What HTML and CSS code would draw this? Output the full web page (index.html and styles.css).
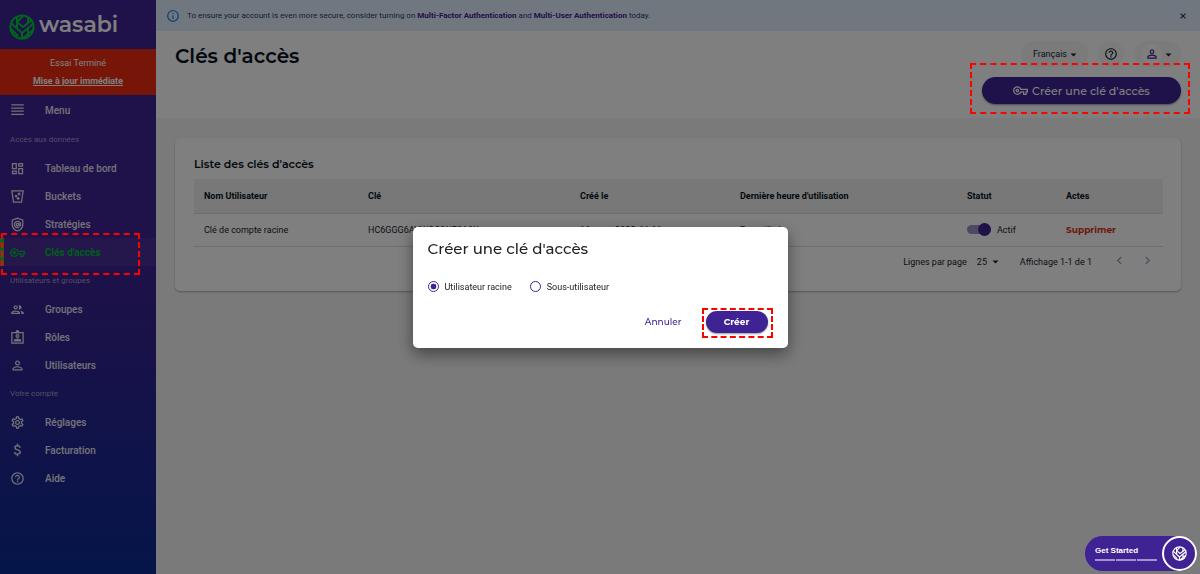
FILE: index.html
```html
<!DOCTYPE html>
<html lang="fr">
<head>
    <meta charset="UTF-8">
    <meta name="viewport" content="width=device-width, initial-scale=1.0">
    <title>Clés d'accès - Wasabi</title>
    <link rel="stylesheet" href="styles.css">
</head>
<body>
<!-- Shared icons -->
<svg class="sprite" aria-hidden="true">
    <symbol id="leaf" viewBox="0 0 26 26">
        <g fill="none" stroke="currentColor" stroke-width="2" stroke-linejoin="round">
            <circle cx="13" cy="13" r="11.6"/>
            <path d="M2 9 L13 19 V25"/>
            <path d="M8 3 V14 M2 15 L9 22"/>
            <path d="M14 2 L8 8 M8 8 L14 13 L23 6"/>
            <path d="M13 19 L24 10 M19 9 V3 M19 14 V23 M13 25 L24 16"/>
        </g>
    </symbol>
    <symbol id="key" viewBox="0 0 24 24">
        <path fill="currentColor" d="M22 19h-6v-4h-2.68c-1.14 2.42-3.6 4-6.32 4-3.86 0-7-3.14-7-7s3.14-7 7-7c2.72 0 5.17 1.58 6.32 4H24v6h-2v4zm-4-2h2v-4h2v-2H11.94l-.23-.67C11.01 8.34 9.11 7 7 7c-2.76 0-5 2.24-5 5s2.24 5 5 5c2.11 0 4.01-1.34 4.71-3.33l.23-.67H18v4zM7 15c-1.65 0-3-1.35-3-3s1.35-3 3-3 3 1.35 3 3-1.35 3-3 3zm0-4c-.55 0-1 .45-1 1s.45 1 1 1 1-.45 1-1-.45-1-1-1z"/>
    </symbol>
    <symbol id="help" viewBox="0 0 24 24">
        <path fill="currentColor" d="M11 18h2v-2h-2v2zm1-16C6.48 2 2 6.48 2 12s4.48 10 10 10 10-4.48 10-10S17.520 2 12 2zm0 18c-4.41 0-8-3.59-8-8s3.59-8 8-8 8 3.59 8 8-3.59 8-8 8zm0-14c-2.21 0-4 1.79-4 4h2c0-1.1.9-2 2-2s2 .9 2 2c0 2-3 1.750-3 5h2c0-2.250 3-2.500 3-5 0-2.210-1.790-4-4-4z"/>
    </symbol>
    <symbol id="person" viewBox="0 0 24 24">
        <path fill="currentColor" d="M12 5.9a2.1 2.1 0 1 1 0 4.2 2.1 2.1 0 0 1 0-4.2m0 9c2.97 0 6.1 1.46 6.1 2.1v1.1H5.9V17c0-.64 3.13-2.1 6.1-2.1M12 4C9.79 4 8 5.79 8 8s1.79 4 4 4 4-1.79 4-4-1.79-4-4-4zm0 9c-2.67 0-8 1.34-8 4v3h16v-3c0-2.66-5.33-4-8-4z"/>
    </symbol>
    <symbol id="caret" viewBox="0 0 24 24">
        <path fill="currentColor" d="M4 9l8 8 8-8z"/>
    </symbol>
</svg>

<div class="app">
    <aside class="sidebar">
        <a class="brand" href="#">
            <svg class="brand-mark"><use href="#leaf"/></svg>
            <span class="brand-name">wasabi</span>
        </a>

        <div class="trial">
            <span>Essai Terminé</span>
            <a href="#">Mise à jour immédiate</a>
        </div>

        <nav class="nav">
            <button class="nav-item nav-toggle" type="button">
                <svg class="nav-icon" viewBox="0 0 24 24"><path fill="currentColor" d="M2 2h20v2H2zM2 7h20v2H2zM2 12h20v2H2zM2 17h20v2H2z"/></svg>
                Menu
            </button>

            <h2 class="nav-label">Accès aux données</h2>
            <a class="nav-item" href="#">
                <svg class="nav-icon" viewBox="0 0 24 24"><path fill="currentColor" d="M19 5v2h-4V5h4M9 5v6H5V5h4m10 8v6h-4v-6h4M9 17v2H5v-2h4M21 3h-8v6h8V3zM11 3H3v10h8V3zm10 8h-8v10h8V11zm-10 4H3v6h8v-6z"/></svg>
                Tableau de bord
            </a>
            <a class="nav-item" href="#">
                <svg class="nav-icon" viewBox="0 0 24 24">
                    <path fill="none" stroke="currentColor" stroke-width="2" d="M3 3h18l-2.6 18H5.6z"/>
                    <path fill="currentColor" d="M12.500 6h4v4h-4zM8 9.500h3.500v3.500H8z"/>
                    <circle cx="13" cy="15" r="2.300" fill="currentColor"/>
                </svg>
                Buckets
            </a>
            <a class="nav-item" href="#">
                <svg class="nav-icon" viewBox="0 0 24 24">
                    <g fill="none" stroke="currentColor" stroke-width="2">
                        <path d="M12 1.800 3.500 5v6.500c0 5 3.600 9.300 8.500 10.700 4.900-1.400 8.500-5.700 8.500-10.700V5z"/>
                        <path d="M14.500 16.200A5 5 0 1 1 17 12v.6c0 1.900-2.700 1.900-2.700 0V9.700"/>
                        <circle cx="12" cy="12" r="2"/>
                    </g>
                </svg>
                Stratégies
            </a>
            <a class="nav-item active marked" href="#">
                <svg class="nav-icon"><use href="#key"/></svg>
                Clés d'accès
            </a>

            <h2 class="nav-label">Utilisateurs et groupes</h2>
            <a class="nav-item" href="#">
                <svg class="nav-icon" viewBox="0 0 24 24"><path fill="currentColor" d="M9 13.750c-2.340 0-7 1.170-7 3.500V19h14v-1.750c0-2.330-4.660-3.500-7-3.500zM4.340 17c.84-.58 2.870-1.250 4.660-1.250s3.820.67 4.660 1.250H4.340zM9 12c1.930 0 3.500-1.570 3.500-3.500S10.930 5 9 5 5.500 6.570 5.500 8.500 7.070 12 9 12zm0-5c.83 0 1.500.67 1.500 1.500S9.830 10 9 10s-1.500-.67-1.500-1.500S8.170 7 9 7zm7.040 6.810c1.160.84 1.960 1.960 1.960 3.440V19h4v-1.750c0-2.020-3.500-3.170-5.960-3.440zM15 12c1.930 0 3.500-1.570 3.500-3.500S16.930 5 15 5c-.54 0-1.040.13-1.500.35.63.89 1 1.980 1 3.150s-.37 2.260-1 3.150c.46.22.96.35 1.500.35z"/></svg>
                Groupes
            </a>
            <a class="nav-item" href="#">
                <svg class="nav-icon" viewBox="0 0 24 24">
                    <path fill="none" stroke="currentColor" stroke-width="2" d="M3 4h18v17H3z"/>
                    <path fill="currentColor" d="M9 5V3a3 3 0 0 1 6 0v2zM6 18.500v-1.700c0-2 4-3.100 6-3.100s6 1.100 6 3.100v1.700z"/>
                    <circle cx="12" cy="9.700" r="2.200" fill="none" stroke="currentColor" stroke-width="2"/>
                </svg>
                Rôles
            </a>
            <a class="nav-item" href="#">
                <svg class="nav-icon"><use href="#person"/></svg>
                Utilisateurs
            </a>

            <h2 class="nav-label">Votre compte</h2>
            <a class="nav-item" href="#">
                <svg class="nav-icon" viewBox="0 0 24 24"><path fill="currentColor" d="M19.430 12.980c.04-.32.070-.64.070-.98 0-.34-.03-.66-.07-.98l2.110-1.650c.19-.15.24-.42.120-.64l-2-3.460c-.09-.16-.26-.25-.44-.25-.06 0-.12.010-.17.030l-2.490 1c-.52-.4-1.080-.73-1.690-.98l-.38-2.650C14.460 2.180 14.250 2 14 2h-4c-.25 0-.46.180-.49.420l-.38 2.650c-.61.250-1.170.590-1.690.980l-2.490-1c-.06-.02-.12-.03-.18-.03-.17 0-.34.090-.43.250l-2 3.460c-.13.220-.07.490.120.640l2.110 1.650c-.04.320-.07.650-.07.980 0 .33.030.66.070.98l-2.110 1.650c-.19.150-.24.420-.12.640l2 3.460c.09.160.26.250.44.250.06 0 .12-.01.17-.03l2.490-1c.52.400 1.080.730 1.690.980l.38 2.650c.03.240.24.420.49.420h4c.25 0 .46-.18.49-.42l.38-2.650c.61-.25 1.170-.59 1.690-.98l2.490 1c.06.020.12.030.18.030.17 0 .34-.09.43-.25l2-3.460c.12-.22.070-.49-.12-.64l-2.110-1.650zm-1.980-1.710c.04.310.050.520.050.730 0 .210-.02.430-.05.730l-.14 1.130.89.700 1.080.840-.7 1.210-1.270-.51-1.040-.42-.9.680c-.43.320-.84.560-1.250.730l-1.060.430-.16 1.130-.2 1.350h-1.400l-.19-1.350-.16-1.130-1.060-.43c-.43-.18-.83-.41-1.230-.71l-.91-.7-1.060.430-1.270.510-.7-1.210 1.080-.84.890-.7-.14-1.130c-.03-.31-.05-.54-.05-.74s.02-.43.050-.73l.14-1.130-.89-.7-1.080-.84.700-1.210 1.270.510 1.040.420.900-.68c.43-.32.840-.56 1.250-.73l1.060-.43.160-1.130.200-1.350h1.390l.19 1.350.16 1.130 1.060.430c.43.180.83.410 1.230.710l.91.700 1.060-.43 1.270-.51.700 1.210-1.070.850-.89.700.14 1.130zM12 8c-2.210 0-4 1.790-4 4s1.790 4 4 4 4-1.790 4-4-1.790-4-4-4zm0 6c-1.100 0-2-.9-2-2s.9-2 2-2 2 .9 2 2-.9 2-2 2z"/></svg>
                Réglages
            </a>
            <a class="nav-item" href="#">
                <svg class="nav-icon" viewBox="0 0 24 24"><path fill="none" stroke="currentColor" stroke-width="2.200" d="M16 7.500c0-2-1.800-3.200-4-3.200s-4.300 1.200-4.300 3.200c0 4.500 8.800 2.500 8.800 7 0 2-1.900 3.300-4.500 3.300s-4.500-1.400-4.500-3.600M12 1v4m0 12v4"/></svg>
                Facturation
            </a>
            <a class="nav-item" href="#">
                <svg class="nav-icon"><use href="#help"/></svg>
                Aide
            </a>
        </nav>
    </aside>

    <main class="main">
        <div class="banner">
            <svg class="banner-icon" viewBox="0 0 24 24"><path fill="currentColor" d="M11 7h2v2h-2zm0 4h2v6h-2zm1-9C6.480 2 2 6.480 2 12s4.480 10 10 10 10-4.480 10-10S17.520 2 12 2zm0 18c-4.410 0-8-3.590-8-8s3.590-8 8-8 8 3.590 8 8-3.590 8-8 8z"/></svg>
            <p>To ensure your account is even more secure, consider turning on <a href="#">Multi-Factor Authentication</a> and <a href="#">Multi-User Authentication</a> today.</p>
            <button class="banner-close" type="button" aria-label="Fermer">
                <svg viewBox="0 0 10 10"><path stroke="currentColor" stroke-width="2" d="M1 1l8 8M9 1l-8 8"/></svg>
            </button>
        </div>

        <header class="header">
            <h1>Clés d'accès</h1>
            <div class="header-side">
                <div class="tools">
                    <button class="chip" type="button">Français <svg class="caret"><use href="#caret"/></svg></button>
                    <button class="chip chip-help" type="button" aria-label="Aide"><svg class="tool-icon"><use href="#help"/></svg></button>
                    <button class="chip chip-user" type="button" aria-label="Compte">
                        <span class="avatar"><svg class="tool-icon"><use href="#person"/></svg></span>
                        <svg class="caret"><use href="#caret"/></svg>
                    </button>
                </div>
                <button class="btn create-key marked" type="button">
                    <svg class="key-icon"><use href="#key"/></svg>
                    Créer une clé d'accès
                </button>
            </div>
        </header>

        <section class="card">
            <h2>Liste des clés d'accès</h2>
            <table class="keys">
                <thead>
                    <tr>
                        <th class="col-user">Nom Utilisateur</th>
                        <th class="col-key">Clé</th>
                        <th class="col-created">Créé le</th>
                        <th class="col-used">Dernière heure d'utilisation</th>
                        <th class="col-status">Statut</th>
                        <th class="col-actions">Actes</th>
                    </tr>
                </thead>
                <tbody>
                    <tr>
                        <td>Clé de compte racine</td>
                        <td>HC6GGG6AVWQO9NE8A9K</td>
                        <td>16 mars 2025, 11:11</td>
                        <td>Pas utilisé</td>
                        <td>
                            <label class="status"><input class="switch" type="checkbox" checked> Actif</label>
                        </td>
                        <td><button class="delete" type="button">Supprimer</button></td>
                    </tr>
                </tbody>
            </table>
            <div class="pagination">
                <label for="rows">Lignes par page</label>
                <span class="rows">
                    <select id="rows">
                        <option>25</option>
                        <option>50</option>
                        <option>100</option>
                    </select>
                    <svg class="caret"><use href="#caret"/></svg>
                </span>
                <span class="range">Affichage 1-1 de 1</span>
                <button class="pager" type="button" aria-label="Page précédente" disabled>
                    <svg viewBox="0 0 10 10"><path d="M7 1 3 5l4 4"/></svg>
                </button>
                <button class="pager" type="button" aria-label="Page suivante" disabled>
                    <svg viewBox="0 0 10 10"><path d="M3 1l4 4-4 4"/></svg>
                </button>
            </div>
        </section>
    </main>
</div>

<!-- Create key dialog -->
<div class="backdrop">
    <form class="modal" role="dialog" aria-labelledby="modal-title">
        <h2 id="modal-title">Créer une clé d'accès</h2>
        <div class="choices">
            <label><input type="radio" name="owner" checked> Utilisateur racine</label>
            <label><input type="radio" name="owner"> Sous-utilisateur</label>
        </div>
        <div class="modal-actions">
            <button class="cancel" type="button">Annuler</button>
            <button class="btn submit marked" type="button">Créer</button>
        </div>
    </form>
</div>

<button class="get-started" type="button">
    <span class="steps">
        Get Started
        <span class="bars"><i></i><i></i><i></i></span>
    </span>
    <span class="get-started-logo"><svg><use href="#leaf"/></svg></span>
</button>
</body>
</html>
```

FILE: styles.css
```css
* {
    box-sizing: border-box;
}

body {
    margin: 0;
    font-family: Roboto, "Liberation Sans", sans-serif;
    font-size: 9px;
    color: #16232e;
    background: #f4f4f4;
}

h1, h2, p {
    margin: 0;
}

button {
    font: inherit;
    color: inherit;
    border: none;
    background: none;
    padding: 0;
    cursor: pointer;
}

.sprite {
    display: none;
}

.app {
    display: flex;
    min-height: 100vh;
}

/* Sidebar */
.sidebar {
    flex: 0 0 156px;
    background: linear-gradient(#3f2293 45%, #0b2a92 100%);
    color: #fff;
}

.brand {
    display: flex;
    align-items: center;
    gap: 4px;
    height: 49px;
    padding: 5px 9px 0;
    color: #fff;
    text-decoration: none;
}

.brand-mark {
    width: 26px;
    height: 26px;
    color: #00c83c;
}

.brand-name {
    padding-bottom: 4px;
    font-family: Montserrat, Inter, sans-serif;
    font-size: 22px;
    font-weight: 600;
    line-height: 24px;
}

.trial {
    display: flex;
    flex-direction: column;
    align-items: center;
    gap: 6px;
    padding: 8px 0;
    background: #ee2c11;
    line-height: 12px;
}

.trial a {
    color: inherit;
    font-weight: 700;
}

.nav-item {
    display: flex;
    align-items: center;
    gap: 20px;
    width: 100%;
    height: 28px;
    padding-left: 10px;
    color: #e8e4f2;
    font-size: 10px;
    font-weight: 500;
    text-decoration: none;
}

.nav-toggle {
    height: 30px;
}

.nav-icon {
    width: 15px;
    height: 15px;
}

.nav-label {
    height: 29px;
    padding-left: 10px;
    font-size: 8px;
    font-weight: 400;
    line-height: 30px;
    color: #a79cc9;
}

.nav-item.active {
    position: relative;
    background: #4a2f98;
    border-left: 4px solid #16c644;
    padding-left: 6px;
    color: #00b93a;
    font-weight: 700;
}

/* Main column */
.main {
    flex: 1;
    min-width: 0;
}

.banner {
    display: flex;
    align-items: center;
    gap: 7px;
    height: 31px;
    padding: 0 14px 0 10px;
    background: #e3effe;
    font-size: 8px;
    color: #1c3e60;
}

.banner-icon {
    width: 14px;
    height: 14px;
    color: #1a73e8;
}

.banner a {
    color: #3f2293;
    font-weight: 700;
    text-decoration: none;
}

.banner-close {
    margin-left: auto;
    line-height: 0;
}

.banner-close svg {
    width: 6px;
    height: 6px;
}

.header {
    display: flex;
    justify-content: space-between;
    padding: 10px 19px 14px;
    background: #fff;
}

.header h1 {
    font-family: Montserrat, Inter, sans-serif;
    font-size: 20px;
    font-weight: 600;
    line-height: 30px;
    color: #04121f;
}

.header-side {
    display: flex;
    flex-direction: column;
    align-items: flex-end;
    gap: 10px;
}

.tools {
    display: flex;
    gap: 10px;
}

.chip {
    display: flex;
    align-items: center;
    gap: 2px;
    height: 26px;
    padding: 0 10px 0 12px;
    border-radius: 13px;
    background: #f7f7f7;
}

.chip-help {
    padding: 0 6px;
}

.chip-user {
    padding: 0 8px;
}

.avatar {
    display: flex;
    padding: 3px;
    border-radius: 50%;
    background: #fff;
    color: #3f2293;
}

.tool-icon {
    width: 14px;
    height: 14px;
}

.caret {
    width: 9px;
    height: 9px;
}

.btn {
    position: relative;
    border-radius: 14px;
    background: #3f2293;
    color: #fff;
    font-family: Montserrat, Inter, sans-serif;
    box-shadow: 0 1px 2px rgba(0, 0, 0, 0.4);
}

.create-key {
    display: flex;
    align-items: center;
    justify-content: center;
    gap: 4px;
    width: 199px;
    height: 27px;
    font-size: 11px;
    font-weight: 500;
}

.key-icon {
    width: 15px;
    height: 15px;
}

/* Keys list */
.card {
    margin: 20px 19px;
    padding: 18px 18px 14px 19px;
    border-radius: 5px;
    background: #fff;
    box-shadow: 0 1px 2px rgba(0, 0, 0, 0.3);
}

.card h2 {
    margin-bottom: 7px;
    font-family: Montserrat, Inter, sans-serif;
    font-size: 11px;
    font-weight: 600;
    line-height: 16px;
    color: #04121f;
}

.keys {
    width: 100%;
    border-collapse: collapse;
    table-layout: fixed;
}

.keys th,
.keys td {
    height: 34px;
    padding: 0 10px;
    text-align: left;
    white-space: nowrap;
    border-bottom: 1px solid #dcdcdc;
}

.keys th {
    background: #f1f1f1;
    font-weight: 700;
    color: #04121f;
}

.keys td {
    height: 33px;
}

.col-user {
    width: 164px;
}

.col-key {
    width: 212px;
}

.col-created {
    width: 160px;
}

.col-used {
    width: 227px;
}

.col-status {
    width: 99px;
}

.col-actions {
    width: 107px;
}

.status {
    display: flex;
    align-items: center;
    gap: 6px;
}

.switch {
    appearance: none;
    display: flex;
    align-items: center;
    justify-content: flex-end;
    width: 24px;
    height: 9px;
    margin: 0;
    border-radius: 5px;
    background: #9f90c9;
}

.switch::before {
    content: "";
    width: 13px;
    height: 13px;
    border-radius: 50%;
    background: #3f2293;
}

.delete {
    font-family: Montserrat, Inter, sans-serif;
    font-weight: 700;
    color: #dc3014;
}

.pagination {
    display: flex;
    align-items: center;
    justify-content: flex-end;
    height: 30px;
    padding-right: 6px;
}

.rows {
    display: flex;
    align-items: center;
    margin: 0 20px 0 10px;
}

.rows select {
    appearance: none;
    border: none;
    background: none;
    padding: 0;
    width: 14px;
    font: inherit;
    color: inherit;
}

.range {
    margin-right: 17px;
}

.pager {
    width: 20px;
    height: 20px;
}

.pager + .pager {
    margin-left: 8px;
}

.pager svg {
    width: 9px;
    height: 9px;
    fill: none;
    stroke: #a79cc9;
    stroke-width: 1.5;
}

/* Dialog */
.backdrop {
    position: fixed;
    inset: 0;
    display: flex;
    align-items: center;
    justify-content: center;
    background: rgba(0, 0, 0, 0.5);
}

.modal {
    width: 375px;
    padding: 12px 16px 11px 15px;
    border-radius: 5px;
    background: #fff;
    color: #222;
    box-shadow: 0 6px 16px rgba(0, 0, 0, 0.45);
}

.modal h2 {
    font-family: Montserrat, Inter, sans-serif;
    font-size: 15px;
    font-weight: 500;
    line-height: 20px;
}

.choices {
    display: flex;
    gap: 18px;
    padding: 20px 0 12px;
}

.choices label {
    display: flex;
    align-items: center;
    gap: 6px;
    line-height: 16px;
}

.choices input {
    appearance: none;
    width: 11px;
    height: 11px;
    margin: 0;
    border: 1px solid #3f2293;
    border-radius: 50%;
}

.choices input:checked {
    background: radial-gradient(#3f2293 42%, #fff 50%);
}

.modal-actions {
    display: flex;
    align-items: center;
    justify-content: flex-end;
    gap: 24px;
    padding: 4px;
    font-family: Montserrat, Inter, sans-serif;
}

.cancel {
    color: #3f2293;
    font-weight: 500;
}

.submit {
    width: 62px;
    height: 22px;
    font-weight: 700;
}

/* Dashed callouts */
.marked::after {
    content: "";
    position: absolute;
    z-index: 5;
    border: 2px dashed #f00;
    pointer-events: none;
}

.nav-item.marked::after {
    inset: -5px 16px -9px -3px;
}

.create-key.marked::after {
    inset: -14px -9px -10px -12px;
}

.submit.marked::after {
    inset: -3px -5px -5px -4px;
}

/* Onboarding widget */
.get-started {
    position: fixed;
    right: 3px;
    bottom: 3px;
    display: flex;
    align-items: center;
    gap: 5px;
    padding-left: 10px;
    border-radius: 18px;
    background: #3f2293;
    color: #fff;
    font-family: "Liberation Sans", Arial, sans-serif;
    font-size: 8px;
    font-weight: 700;
    text-align: left;
}

.bars {
    display: flex;
    gap: 1px;
    margin-top: 4px;
}

.bars i {
    width: 20px;
    height: 2px;
    background: #a394d0;
}

.get-started-logo {
    display: flex;
    padding: 8px;
    border: 2px solid #fff;
    border-radius: 50%;
}

.get-started-logo svg {
    width: 15px;
    height: 15px;
}
```
